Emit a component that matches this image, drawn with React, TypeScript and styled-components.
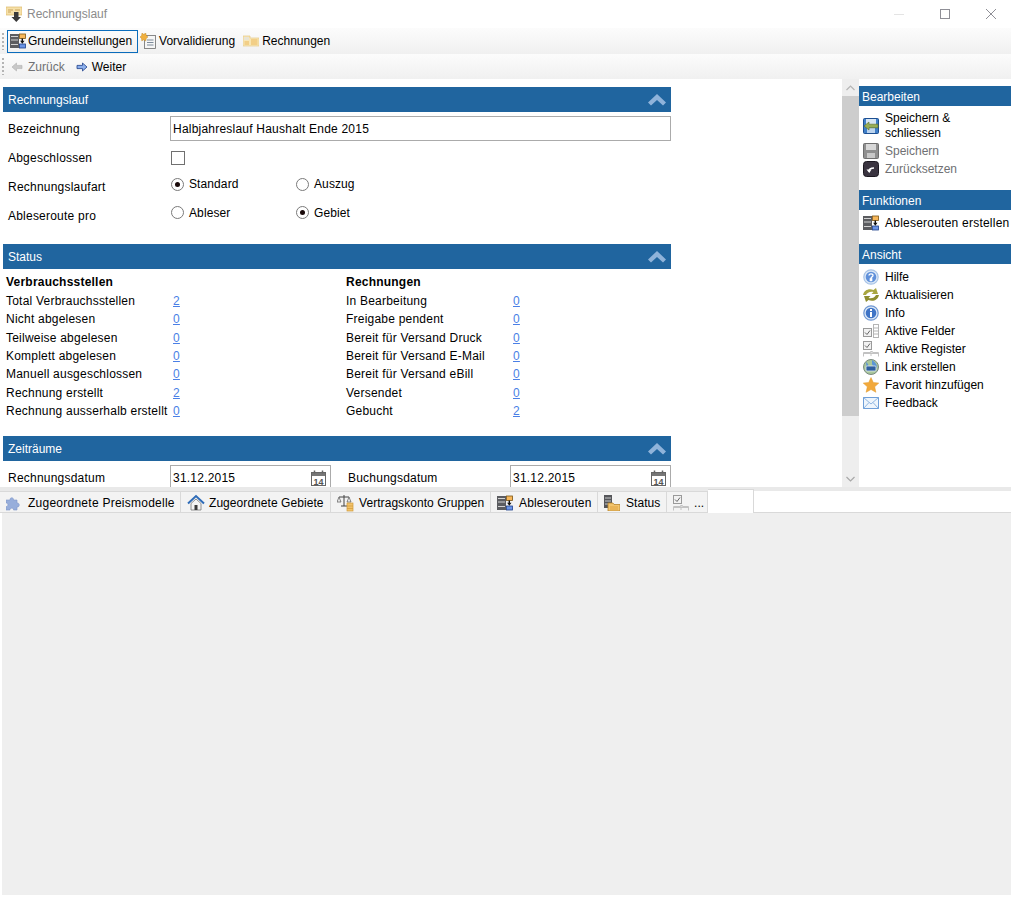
import React from 'react';
import styled, { createGlobalStyle } from 'styled-components';

const Colors = {
  header: '#20659f',
  link: '#4a7fe6',
  border: '#ababab',
  muted: '#6f7073',
  tabLine: '#d9d9d9',
  panel: '#efefef'
};

const GlobalStyle = createGlobalStyle`
  html, body {
    margin: 0;
    padding: 0;
    background: #fff;
    overflow: hidden;
  }
  body {
    font-family: "Liberation Sans", Arial, sans-serif;
    font-size: 12px;
    color: #000;
  }
`;

const Window = styled.div`
  width: 1011px;
  height: 897px;
  display: flex;
  flex-direction: column;
  background: #fff;
  overflow: hidden;
`;

/* title bar */
const TitleBar = styled.div`
  height: 28px;
  display: flex;
  align-items: center;
  padding: 0 14px 0 6px;
  color: #8b8b8b;
`;

const TitleText = styled.span`
  margin-left: 5px;
  flex: 1;
`;

const Caption = styled.svg`
  width: 12px;
  height: 12px;
  margin-left: 34px;
  display: block;
`;

/* toolbars */
const Toolbar = styled.div<{ $height: number }>`
  height: ${(p) => p.$height}px;
  display: flex;
  align-items: center;
  padding-left: 2px;
  background: linear-gradient(#fcfcfc, #f0f0f0);
`;

const Grip = styled.div`
  width: 2px;
  height: 17px;
  margin-right: 3px;
  background: repeating-linear-gradient(#b4b4b4 0 2px, transparent 2px 4px);
`;

const ToolButton = styled.div<{ $active?: boolean; $muted?: boolean; $gap?: number; $padLeft?: number; $padRight?: number }>`
  display: flex;
  align-items: center;
  gap: ${(p) => p.$gap ?? 3}px;
  height: 23px;
  padding: 0 ${(p) => p.$padRight ?? 3}px 0 ${(p) => p.$padLeft ?? 3}px;
  box-sizing: border-box;
  border: 1px solid ${(p) => (p.$active ? '#0a6cbc' : 'transparent')};
  color: ${(p) => (p.$muted ? Colors.muted : '#000')};
  white-space: nowrap;
`;

/* upper area */
const Upper = styled.div`
  height: 408px;
  display: flex;
`;

const Pane = styled.div`
  width: 842px;
  box-sizing: border-box;
  padding: 8px 0 0 3px;
  overflow: hidden;
`;

const Section = styled.section<{ $height?: number }>`
  width: 668px;
  height: ${(p) => (p.$height ? `${p.$height}px` : 'auto')};
`;

const SectionHeader = styled.div`
  height: 25px;
  display: flex;
  align-items: center;
  justify-content: space-between;
  padding: 0 5px;
  background: ${Colors.header};
  color: #fff;
`;

const Body = styled.div<{ $pad?: number }>`
  padding-top: ${(p) => p.$pad ?? 4}px;
  letter-spacing: 0.22px;
`;

const FormRow = styled.div<{ $height: number }>`
  height: ${(p) => p.$height}px;
  display: grid;
  grid-template-columns: 167px 125px 1fr;
  align-items: center;
`;

const FieldLabel = styled.div<{ $drop?: number }>`
  padding-left: 5px;
  padding-top: ${(p) => p.$drop ?? 0}px;
`;

const TextInput = styled.div`
  grid-column: 2 / 4;
  height: 25px;
  box-sizing: border-box;
  display: flex;
  align-items: center;
  padding-left: 2px;
  border: 1px solid ${Colors.border};
`;

const Check = styled.div`
  width: 12px;
  height: 12px;
  margin-left: 1px;
  border: 1px solid #707070;
`;

const RadioLabel = styled.div`
  display: flex;
  align-items: center;
  gap: 5px;
  padding: 0 0 3px 1px;
  letter-spacing: 0.1px;
`;

const RadioDot = styled.span<{ $on?: boolean }>`
  width: 11px;
  height: 11px;
  border: 1px solid #7a7a7a;
  border-radius: 50%;
  display: flex;
  align-items: center;
  justify-content: center;
  &::after {
    content: '';
    width: 5px;
    height: 5px;
    border-radius: 50%;
    background: ${(p) => (p.$on ? '#1a0a0a' : 'transparent')};
  }
`;

const StatusGrid = styled.div`
  display: grid;
  grid-template-columns: 340px 1fr;
  padding-left: 3px;
`;

const StatusTitle = styled.div`
  height: 19px;
  line-height: 19px;
  font-weight: 700;
`;

const StatusRow = styled.div`
  height: 18.33px;
  display: grid;
  grid-template-columns: 167px 1fr;
  align-items: center;
  white-space: nowrap;
`;

const CountLink = styled.a`
  color: ${Colors.link};
  text-decoration: underline;
`;

const DateGrid = styled.div`
  display: grid;
  grid-template-columns: 167px 161px 17px 1fr 161px;
  align-items: center;
`;

const DateInput = styled.div`
  height: 25px;
  box-sizing: border-box;
  display: flex;
  align-items: center;
  justify-content: space-between;
  padding: 0 3px 0 2px;
  border: 1px solid ${Colors.border};
`;

/* scrollbar */
const Scrollbar = styled.div`
  width: 17px;
  display: flex;
  flex-direction: column;
  background: #eeeeee;
`;

const ScrollArrow = styled.div`
  height: 17px;
  display: flex;
  align-items: center;
  justify-content: center;
`;

const ScrollThumb = styled.div`
  height: 320px;
  background: #cdcdcd;
`;

const ScrollRest = styled.div`
  flex: 1;
`;

/* sidebar */
const Sidebar = styled.aside`
  flex: 1;
  padding-top: 7px;
  overflow: hidden;
`;

const SideHeader = styled.div`
  height: 20px;
  line-height: 22px;
  padding-left: 3px;
  background: ${Colors.header};
  color: #fff;
`;

const SideGroup = styled.div<{ $height: number; $pad?: number }>`
  height: ${(p) => p.$height}px;
  padding-top: ${(p) => p.$pad ?? 4}px;
  box-sizing: border-box;
`;

const SideItem = styled.div<{ $muted?: boolean; $tall?: boolean; $spacing?: number }>`
  min-height: 18px;
  display: flex;
  align-items: center;
  gap: 6px;
  padding: ${(p) => (p.$tall ? '2px 0 1px 4px' : '0 0 0 4px')};
  color: ${(p) => (p.$muted ? Colors.muted : '#000')};
  letter-spacing: ${(p) => p.$spacing ?? 0}px;
  white-space: nowrap;
`;

const TwoLine = styled.span`
  line-height: 15px;
`;

/* tabs */
const TabStrip = styled.div`
  height: 26px;
  box-sizing: border-box;
  display: flex;
  align-items: flex-end;
  background: linear-gradient(#e9e9e9 0 4px, #fff 4px);
  border-bottom: 1px solid ${Colors.tabLine};
`;

const Tab = styled.div<{ $width: number; $gap: number; $spacing?: number }>`
  width: ${(p) => p.$width}px;
  height: 21px;
  box-sizing: border-box;
  display: flex;
  align-items: center;
  gap: ${(p) => p.$gap}px;
  padding: 1px 0 0 6px;
  background: #f3f3f3;
  border-top: 1px solid ${Colors.tabLine};
  border-right: 1px solid ${Colors.tabLine};
  letter-spacing: ${(p) => p.$spacing ?? 0.06}px;
  white-space: nowrap;
`;

const ActiveTab = styled.div`
  width: 46px;
  height: 24px;
  margin-bottom: -1px;
  box-sizing: border-box;
  background: #fff;
  border-top: 1px solid ${Colors.tabLine};
  border-right: 1px solid ${Colors.tabLine};
`;

const TabBody = styled.div`
  height: 382px;
  background: ${Colors.panel};
  margin-left: 2px;
`;

/* drawn icons, 16 unit grid */
const Svg = styled.svg<{ $size?: number }>`
  width: ${(p) => p.$size ?? 16}px;
  height: ${(p) => p.$size ?? 16}px;
  display: block;
  flex: none;
`;

const Route = () => (
  <Svg viewBox="0 0 16 16">
    <rect x="0" y="1" width="9" height="14" fill="#5b5c60" />
    <path d="M1 3.500h7M1 7h7M1 11.500h7" stroke="#d2d2d2" strokeWidth="1.200" />
    <rect x="9.500" y="1" width="6" height="4.500" fill="#f7b75a" stroke="#7a5412" strokeWidth=".8" />
    <rect x="9.500" y="11" width="6" height="4" fill="#6a94e6" stroke="#1d3f8a" strokeWidth=".8" />
    <path d="M11.600 5.500h1.400v2.300h1.500l-2.200 2.900-2.200-2.900h1.500z" fill="#111" />
  </Svg>
);

const Folder = () => (
  <Svg viewBox="0 0 16 16">
    <path d="M0 3h7v2h9v8H0z" fill="#f8e6b4" stroke="#e6c887" strokeWidth=".7" />
    <rect x="1" y="4" width="5" height="3" fill="#e9e4d4" />
    <path d="M8 7h6.500M8 9h6.500M8 11h6.500M1.500 9h4.500M1.500 11h4.500" stroke="#ecb75a" strokeWidth="1" />
  </Svg>
);

const TitleIcon = () => (
  <Svg viewBox="0 0 16 16">
    <path d="M0 1h16v8H0z" fill="#f6e0a8" stroke="#dcb96c" strokeWidth=".7" />
    <path d="M2 4h5M9 4h5M2 6h3" stroke="#c9a45a" strokeWidth="1" />
    <path d="M8 6h4.500v5H15l-4.700 5-4.800-5H8z" fill="#3a3a3a" />
  </Svg>
);

const Validate = () => (
  <Svg viewBox="0 0 16 16">
    <rect x="4.500" y="2.500" width="11" height="13" fill="#f6f6f6" stroke="#6d6d6d" strokeWidth=".8" />
    <path d="M7 7h6.500M7 9.500h6.500M7 12h6.500" stroke="#7c8a9a" strokeWidth="1" />
    <path d="M2 0l1.700 1.300L5.800 0l.4 2.300L8 4 6.300 5.300 5.800 8 3.700 6.800 1.800 8l-.3-2.600L0 4l1.600-1.600z" fill="#f0b040" stroke="#b98420" strokeWidth=".4" />
  </Svg>
);

const ArrowRight = ({ back }: { back?: boolean }) => (
  <Svg $size={12} viewBox="0 0 12 12">
    {back ? (
      <path d="M1 6l4.500-4v2.400H11v3.200H5.500V10z" fill="#c8c8c8" stroke="#b0b0b0" strokeWidth=".6" />
    ) : (
      <path d="M11 6L6.500 2v2.400H1v3.200h5.500V10z" fill="#8db0ec" stroke="#1d3f8a" strokeWidth=".8" />
    )}
  </Svg>
);

const Collapse = () => (
  <Svg $size={18} viewBox="0 0 18 12">
    <path d="M0 8.500L9 0l9 8.500-3 3-6-5.500-6 5.500z" fill="#8fb3da" />
  </Svg>
);

const Disk = ({ gray }: { gray?: boolean }) => (
  <Svg viewBox="0 0 16 16">
    <rect x=".5" y=".5" width="15" height="15" rx="1" fill={gray ? '#8f8f8f' : '#3f7ec8'} stroke={gray ? '#6e6e6e' : '#1d4f91'} />
    <rect x="3" y="1" width="10" height="6" fill={gray ? '#d8d8d8' : '#d7e6f5'} />
    <rect x="4" y="10" width="8" height="5" fill={gray ? '#c8c8c8' : '#bcd4ee'} />
    {!gray && <path d="M1 8l5-4v2.200h9v3.600H6V12z" fill="#98ad55" stroke="#5d6f25" strokeWidth=".6" />}
  </Svg>
);

const Reset = () => (
  <Svg viewBox="0 0 16 16">
    <rect x=".5" y=".5" width="15" height="15" rx="3" fill="#3a3440" stroke="#1c1820" />
    <path d="M6 10.500c0-2.500 2-3.500 5-3.500" fill="none" stroke="#fff" strokeWidth="1.600" />
    <path d="M3.500 8.500l2.800 3.500 2.200-3.500z" fill="#fff" />
  </Svg>
);

const Help = ({ info }: { info?: boolean }) => (
  <Svg viewBox="0 0 16 16">
    <circle cx="8" cy="8" r="7.200" fill="#dbe7f6" stroke={info ? '#6f97d2' : '#a7c3e6'} strokeWidth="1.200" />
    <circle cx="8" cy="8" r="5.300" fill={info ? '#3f74c6' : '#5f90da'} />
    {info ? (
      <path d="M7 4h2v2H7zM7 7h2v5H7z" fill="#fff" />
    ) : (
      <path d="M6 6.500c0-2.300 4-2.300 4 0 0 1.500-2 1.300-2 2.800M7.300 10h1.400v1.500H7.300z" fill="none" stroke="#fff" strokeWidth="1.300" />
    )}
  </Svg>
);

const Refresh = () => (
  <Svg viewBox="0 0 16 16">
    <path d="M0 8c1-5 6-7 10.500-5L13 1l2 6H8.500l2-2C7.500 4 4 5.500 3 8z" fill="#a9a640" />
    <path d="M16 8c-1 5-6 7-10.500 5L3 15 1 9h6.500l-2 2c3 1 6.500-.5 7.500-3z" fill="#8e8d2e" />
  </Svg>
);

const Fields = () => (
  <Svg viewBox="0 0 16 16">
    <rect x=".5" y="5.500" width="8" height="8" fill="#f2f2f2" stroke="#9a9a9a" />
    <path d="M2 9.500l2 2 3-4" fill="none" stroke="#666" />
    <rect x="10.500" y="1.500" width="5" height="13" fill="#fff" stroke="#b5b5b5" />
    <path d="M10.500 5h5M10.500 8h5M10.500 11h5" stroke="#b5b5b5" />
  </Svg>
);

const Registers = () => (
  <Svg viewBox="0 0 16 16">
    <rect x=".5" y=".5" width="8" height="8" fill="#f2f2f2" stroke="#9a9a9a" />
    <path d="M2 4.500l2 2 3-4" fill="none" stroke="#666" />
    <path d="M.5 15.500v-4h7v-1h2v1h6v4M.5 12.500h15M8 11v4" fill="none" stroke="#c2c2c2" />
  </Svg>
);

const Globe = () => (
  <Svg viewBox="0 0 16 16">
    <circle cx="8" cy="8" r="7.500" fill="#a9c79b" stroke="#7a8a80" />
    <path d="M3 3c3 2 3 5 1 8M9 1c3 2 5 4 5 8-2-1-4-1-5-4z" fill="#5c96d6" />
    <rect x="3" y="7" width="10" height="5" rx="1" fill="#2f5f9f" stroke="#dfe8f2" strokeWidth=".8" />
  </Svg>
);

const Star = () => (
  <Svg viewBox="0 0 16 16">
    <path d="M8 .5l2.300 5 5.500.6-4.100 3.700 1.200 5.500L8 12.500l-4.900 2.800 1.200-5.500L.2 6.100l5.500-.6z" fill="#f2a93b" stroke="#e09a2e" strokeWidth=".5" />
  </Svg>
);

const Mail = () => (
  <Svg viewBox="0 0 16 16">
    <rect x=".5" y="2.500" width="15" height="11" fill="#eef5fc" stroke="#6f9fd8" />
    <path d="M.5 2.500L8 9l7.500-6.500M.5 13.500L6 7.500M15.500 13.500L10 7.500" fill="none" stroke="#8fb6e2" />
  </Svg>
);

const CalendarDay = styled.text`
  font-family: "Liberation Sans", Arial, sans-serif;
  font-size: 9px;
  font-weight: 700;
  letter-spacing: 0;
  fill: #555;
`;

const Calendar = () => (
  <Svg viewBox="0 0 16 16">
    <rect x=".5" y="2.500" width="14" height="13" fill="#fff" stroke="#666" />
    <rect x="1" y="3" width="13" height="3" fill="#777" />
    <path d="M3.500 .5v3M11.500 .5v3" stroke="#666" strokeWidth="1.500" />
    <CalendarDay x="2.500" y="14.500">14</CalendarDay>
  </Svg>
);

const Puzzle = () => (
  <Svg viewBox="0 0 16 16">
    <path d="M0 5h4C3.500 2 8 2 7.500 5H11v3c3-.5 3 4.500 0 4v3H7.500c.5-2.500-4-2.500-3.500 0H0v-3.500c2.500.5 2.500-4 0-3.500z" fill="#97aedb" stroke="#7f97c9" strokeWidth=".6" />
  </Svg>
);

const House = () => (
  <Svg $size={18} viewBox="0 0 18 18">
    <path d="M1 9.500L9 2l8 7.500" fill="none" stroke="#2f6cb8" strokeWidth="2" />
    <path d="M4 9.500V16h10V9.500L9 5z" fill="#f4f4f4" stroke="#777" strokeWidth=".8" />
    <rect x="7.500" y="11" width="3" height="5" fill="#3c3c3c" />
  </Svg>
);

const Scale = () => (
  <Svg $size={18} viewBox="0 0 18 18">
    <path d="M7 1v11M2 3h10M4 12h6" stroke="#444" strokeWidth="1" />
    <path d="M2 3L0 8h4zM12 3l-2 5h4z" fill="#eee" stroke="#555" strokeWidth=".7" />
    <rect x="10" y="9" width="6" height="8" fill="#f2c36b" stroke="#d19a3a" strokeWidth=".7" />
    <path d="M10 12h6M10 14.500h6" stroke="#d19a3a" strokeWidth=".7" />
  </Svg>
);

const StatusIcon = () => (
  <Svg viewBox="0 0 16 16">
    <rect x="0" y="0" width="8" height="13" fill="#55565a" />
    <path d="M1 3h6M1 6h6M1 9h6" stroke="#c9c9c9" />
    <path d="M4 8h5l1 1.500h6V16H4z" fill="#f3c46c" stroke="#b5842c" strokeWidth=".8" />
    <path d="M6 12h8M6 14h8" stroke="#e0a443" />
  </Svg>
);

const sideView = [
  { label: 'Hilfe', icon: <Help /> },
  { label: 'Aktualisieren', icon: <Refresh /> },
  { label: 'Info', icon: <Help info /> },
  { label: 'Aktive Felder', icon: <Fields /> },
  { label: 'Aktive Register', icon: <Registers /> },
  { label: 'Link erstellen', icon: <Globe /> },
  { label: 'Favorit hinzufügen', icon: <Star /> },
  { label: 'Feedback', icon: <Mail /> }
];

const meters = [
  ['Total Verbrauchsstellen', 2],
  ['Nicht abgelesen', 0],
  ['Teilweise abgelesen', 0],
  ['Komplett abgelesen', 0],
  ['Manuell ausgeschlossen', 0],
  ['Rechnung erstellt', 2],
  ['Rechnung ausserhalb erstellt', 0]
];

const invoices = [
  ['In Bearbeitung', 0],
  ['Freigabe pendent', 0],
  ['Bereit für Versand Druck', 0],
  ['Bereit für Versand E-Mail', 0],
  ['Bereit für Versand eBill', 0],
  ['Versendet', 0],
  ['Gebucht', 2]
];

const StatusColumn = ({ title, rows }: { title: string; rows: (string | number)[][] }) => (
  <div>
    <StatusTitle>{title}</StatusTitle>
    {rows.map(([label, count]) => (
      <StatusRow key={label}>
        <span>{label}</span>
        <CountLink>{count}</CountLink>
      </StatusRow>
    ))}
  </div>
);

const App = () => (
  <Window>
    <GlobalStyle />
    <TitleBar>
      <TitleIcon />
      <TitleText>Rechnungslauf</TitleText>
      <Caption viewBox="0 0 12 12">
        <path d="M1 6.500h10" stroke="#e4e4e4" />
      </Caption>
      <Caption viewBox="0 0 12 12">
        <rect x="1.500" y="1.500" width="9" height="9" fill="none" stroke="#8f8f96" />
      </Caption>
      <Caption viewBox="0 0 12 12">
        <path d="M1 1l10 10M11 1L1 11" stroke="#8f8f96" />
      </Caption>
    </TitleBar>

    <Toolbar $height={26}>
      <Grip />
      <ToolButton $active $gap={2} $padLeft={2} $padRight={5}>
        <Route />
        Grundeinstellungen
      </ToolButton>
      <ToolButton $gap={3} $padLeft={1}>
        <Validate />
        Vorvalidierung
      </ToolButton>
      <ToolButton $gap={3}>
        <Folder />
        Rechnungen
      </ToolButton>
    </Toolbar>
    <Toolbar $height={25}>
      <Grip />
      <ToolButton $muted $gap={5}>
        <ArrowRight back />
        Zurück
      </ToolButton>
      <ToolButton $gap={4} $padLeft={6}>
        <ArrowRight />
        Weiter
      </ToolButton>
    </Toolbar>

    <Upper>
      <Pane>
        <Section $height={157}>
          <SectionHeader>
            Rechnungslauf
            <Collapse />
          </SectionHeader>
          <Body $pad={4}>
            <FormRow $height={25}>
              <FieldLabel>Bezeichnung</FieldLabel>
              <TextInput>Halbjahreslauf Haushalt Ende 2015</TextInput>
            </FormRow>
            <FormRow $height={34}>
              <FieldLabel>Abgeschlossen</FieldLabel>
              <Check />
            </FormRow>
            <FormRow $height={21}>
              <FieldLabel $drop={3}>Rechnungslaufart</FieldLabel>
              <RadioLabel>
                <RadioDot $on />
                Standard
              </RadioLabel>
              <RadioLabel>
                <RadioDot />
                Auszug
              </RadioLabel>
            </FormRow>
            <FormRow $height={36}>
              <FieldLabel $drop={3}>Ableseroute pro</FieldLabel>
              <RadioLabel>
                <RadioDot />
                Ableser
              </RadioLabel>
              <RadioLabel>
                <RadioDot $on />
                Gebiet
              </RadioLabel>
            </FormRow>
          </Body>
        </Section>

        <Section $height={192}>
          <SectionHeader>
            Status
            <Collapse />
          </SectionHeader>
          <Body $pad={4}>
            <StatusGrid>
              <StatusColumn title="Verbrauchsstellen" rows={meters} />
              <StatusColumn title="Rechnungen" rows={invoices} />
            </StatusGrid>
          </Body>
        </Section>

        <Section>
          <SectionHeader>
            Zeiträume
            <Collapse />
          </SectionHeader>
          <Body $pad={4}>
            <DateGrid>
              <FieldLabel>Rechnungsdatum</FieldLabel>
              <DateInput>
                31.12.2015
                <Calendar />
              </DateInput>
              <span />
              <span>Buchungsdatum</span>
              <DateInput>
                31.12.2015
                <Calendar />
              </DateInput>
            </DateGrid>
          </Body>
        </Section>
      </Pane>

      <Scrollbar>
        <ScrollArrow>
          <svg width="9" height="6" viewBox="0 0 9 6">
            <path d="M.5 5l4-4 4 4" fill="none" stroke="#b5b5b5" strokeWidth="1.200" />
          </svg>
        </ScrollArrow>
        <ScrollThumb />
        <ScrollRest />
        <ScrollArrow>
          <svg width="9" height="6" viewBox="0 0 9 6">
            <path d="M.5 1l4 4 4-4" fill="none" stroke="#a8a8a8" strokeWidth="1.200" />
          </svg>
        </ScrollArrow>
      </Scrollbar>

      <Sidebar>
        <SideHeader>Bearbeiten</SideHeader>
        <SideGroup $height={84} $pad={3}>
          <SideItem $tall>
            <Disk />
            <TwoLine>
              Speichern &amp;
              <br />
              schliessen
            </TwoLine>
          </SideItem>
          <SideItem $muted>
            <Disk gray />
            Speichern
          </SideItem>
          <SideItem $muted>
            <Reset />
            Zurücksetzen
          </SideItem>
        </SideGroup>
        <SideHeader>Funktionen</SideHeader>
        <SideGroup $height={34}>
          <SideItem $spacing={0.23}>
            <Route />
            Ableserouten erstellen
          </SideItem>
        </SideGroup>
        <SideHeader>Ansicht</SideHeader>
        <SideGroup $height={160}>
          {sideView.map((item) => (
            <SideItem key={item.label}>
              {item.icon}
              {item.label}
            </SideItem>
          ))}
        </SideGroup>
      </Sidebar>
    </Upper>

    <TabStrip>
      <Tab $width={181} $gap={6} $spacing={0.25}>
        <Puzzle />
        Zugeordnete Preismodelle
      </Tab>
      <Tab $width={150} $gap={4}>
        <House />
        Zugeordnete Gebiete
      </Tab>
      <Tab $width={160} $gap={4}>
        <Scale />
        Vertragskonto Gruppen
      </Tab>
      <Tab $width={107} $gap={6} $spacing={0.15}>
        <Route />
        Ableserouten
      </Tab>
      <Tab $width={69} $gap={6}>
        <StatusIcon />
        Status
      </Tab>
      <Tab $width={41} $gap={5}>
        <Registers />
        ...
      </Tab>
      <ActiveTab />
    </TabStrip>
    <TabBody />
  </Window>
);

export default App;
